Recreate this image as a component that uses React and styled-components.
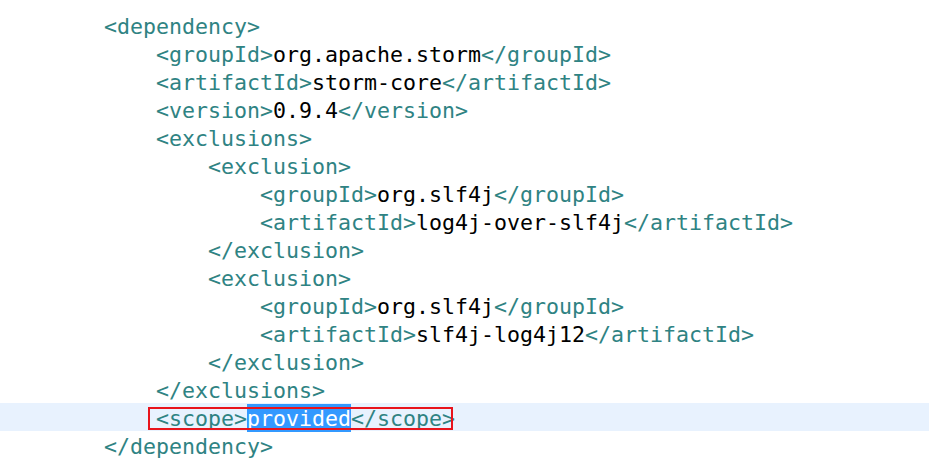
import React from 'react';
import styled, { createGlobalStyle } from 'styled-components';

const GlobalStyle = createGlobalStyle`
  html, body {
    margin: 0;
    padding: 0;
    background: #ffffff;
  }
`;

const Editor = styled.div`
  width: 929px;
  height: 462px;
  overflow: hidden;
  background: #ffffff;
  padding-top: 11px;
  box-sizing: border-box;
  font-family: 'DejaVu Sans Mono', 'Liberation Mono', monospace;
  font-size: 21.6px;
`;

const Line = styled.div`
  height: 28px;
  box-sizing: border-box;
  padding-top: 4px;
  line-height: 24px;
  white-space: pre;
  color: #000000;
  background: ${(p) => (p.$current ? '#e8f2fe' : 'transparent')};
`;

const Tag = styled.span`
  color: #2f8383;
`;

const Selected = styled.span`
  background: #3399ff;
  color: #ffffff;
  padding: 2px 0 1px;
`;

const Marked = styled.span`
  position: relative;

  &::after {
    content: '';
    position: absolute;
    left: -8px;
    right: 2px;
    top: 1px;
    bottom: 1px;
    border: 2px solid #e8141c;
    pointer-events: none;
  }
`;

const pad = (n) => ' '.repeat(n);

// [indent, open tag, text, close tag]
const lines = [
  [8, '<dependency>'],
  [12, '<groupId>', 'org.apache.storm', '</groupId>'],
  [12, '<artifactId>', 'storm-core', '</artifactId>'],
  [12, '<version>', '0.9.4', '</version>'],
  [12, '<exclusions>'],
  [16, '<exclusion>'],
  [20, '<groupId>', 'org.slf4j', '</groupId>'],
  [20, '<artifactId>', 'log4j-over-slf4j', '</artifactId>'],
  [16, '</exclusion>'],
  [16, '<exclusion>'],
  [20, '<groupId>', 'org.slf4j', '</groupId>'],
  [20, '<artifactId>', 'slf4j-log4j12', '</artifactId>'],
  [16, '</exclusion>'],
  [12, '</exclusions>'],
];

export default function App() {
  return (
    <>
      <GlobalStyle />
      <Editor>
        {lines.map(([indent, open, text, close], i) => (
          <Line key={i}>
            {pad(indent)}
            <Tag>{open}</Tag>
            {text}
            {close && <Tag>{close}</Tag>}
          </Line>
        ))}
        <Line $current>
          {pad(12)}
          <Marked>
            <Tag>{'<scope>'}</Tag>
            <Selected>provided</Selected>
            <Tag>{'</scope>'}</Tag>
          </Marked>
        </Line>
        <Line>
          {pad(8)}
          <Tag>{'</dependency>'}</Tag>
        </Line>
      </Editor>
    </>
  );
}
